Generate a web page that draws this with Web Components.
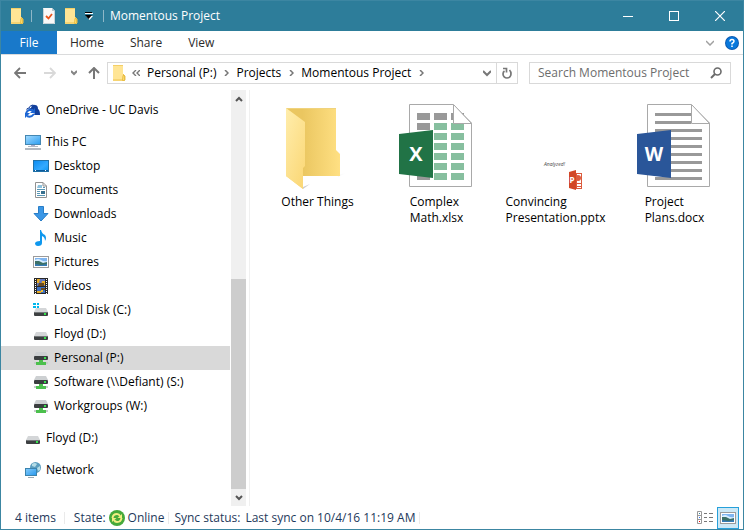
<!DOCTYPE html>
<html lang="en">
<head>
<meta charset="utf-8">
<title>Momentous Project</title>
<style>
html, body { margin: 0; }
body { font: 12px/16px "Open Sans", "Noto Sans", sans-serif; color: #000; background: #fff; }
</style>
</head>
<body>
<explorer-window></explorer-window>
<script>
const folder = `<path d="M1 0H11V9L13 11V16H1Z" fill="#ffe595"/><path d="M1 15H13V11L11 9" fill="none" stroke="#edc351"/><path d="M11 10.500H12.500V15.500H10.500Z" fill="#ffdf6e" stroke="#e8bd45"/><path d="M1 0.500H11" stroke="#f4cf67"/>`;
const drive = `<path d="M3 4H13L15 8H1Z" fill="#d4d6d8"/><rect x="1" y="8" width="14" height="4" rx="1" fill="#3d4042"/><rect x="2" y="8" width="12" height="1" fill="#74787a"/><rect x="11" y="9" width="2" height="2" fill="#35e34b"/>`;
const photo = `<rect x="0.500" y="0.500" width="15" height="11" fill="#fff" stroke="#9b9b9b"/><rect x="2" y="2" width="12" height="8" fill="#7fb5f0"/><path d="M2 4Q5 2 8 4T14 5V7H2Z" fill="#d7edff"/><path d="M2 5L6 5L10 7L14 6V10H2Z" fill="#3d7168"/><path d="M2 10V8L8 9L14 8V10Z" fill="#357bb5"/>`;
const svg = (w, h, b) => `<svg width="${w}" height="${h}" viewBox="0 0 ${w} ${h}" fill="none" aria-hidden="true">${b}</svg>`;
const chev = (d, c = '#777', w = 8, h = 8, s = 2) => svg(w, h, `<path d="${d}" stroke="${c}" stroke-width="${s}"/>`);
const netDrive = svg(16, 16, `<path d="M3 2H13L15 6H1Z" fill="#cdd0d2"/><rect x="1" y="6" width="14" height="4" rx="1" fill="#3b3e40"/><rect x="11" y="7" width="2" height="2" fill="#35e34b"/><path d="M1 12H15V14H1Z" fill="#c9cccd"/><path d="M6 10H10V12H13V15H3V12H6Z" fill="#4cc04d"/>`);
const page = `<path d="M10.500 0.500H54L72.500 19V82.500H10.500Z" fill="#fff" stroke="#a9a9a9"/>`;
const fold = `<path d="M54.500 0.500V19.500H72.500Z" fill="#fff" stroke="#a9a9a9"/>`;
const cells = () => {
  let s = '';
  for (let r = 0; r < 7; r++) for (let c = 0; c < 3; c++)
    s += `<rect x="${18 + c * 17}" y="${9 + r * 10}" width="13" height="7" fill="${r === 0 || c === 0 ? '#999' : '#87bf9f'}"/>`;
  return s;
};
const lines = () => {
  let s = '';
  for (let r = 0; r < 9; r++) s += `<rect x="18" y="${9 + r * 8}" width="${r < 2 ? 36 : 47}" height="3" fill="#999"/>`;
  return s;
};
const ICONS = {
  folder: svg(14, 16, folder),
  check: svg(14, 16, `<path d="M1 0H10L13 3V16H1Z" fill="#f8f8f8"/><path d="M10 0V3H13Z" fill="#bcc8cd"/><path d="M4 8L6.500 10.500L10 6" stroke="#e8541c" stroke-width="1.800"/><path d="M1.500 0.500V15.500H12.500V3" stroke="#c8d3d8"/>`),
  overflow: svg(8, 8, `<path d="M0 1.500H8" stroke="#fff"/><path d="M0 0.500H7" stroke="#000"/><path d="M1 4H8L4.500 8Z" fill="#fff"/><path d="M0 3H7L3.500 7Z" fill="#000"/>`),
  min: svg(10, 10, `<path d="M0 5.500H10" stroke="#fff"/>`),
  max: svg(10, 10, `<rect x="0.500" y="0.500" width="9" height="9" stroke="#fff"/>`),
  close: svg(10, 10, `<path d="M0 0L10 10M10 0L0 10" stroke="#fff" stroke-width="1.200"/>`),
  collapse: chev('M0 1L4 5L8 1', '#a0a0a0', 8, 6, 1.5),
  back: svg(12, 12, `<path d="M12 6H1M6 1L1 6L6 11" stroke="#777" stroke-width="1.800"/>`),
  forward: svg(12, 12, `<path d="M0 6H11M6 1L11 6L6 11" stroke="#d9d9d9" stroke-width="1.800"/>`),
  recent: chev('M0 1L3 4L6 1', '#858585', 6, 6),
  up: svg(12, 12, `<path d="M6 12V1M1 6L6 1L11 6" stroke="#777" stroke-width="2"/>`),
  more: svg(8, 6, `<path d="M4 0L1 3L4 6M8 0L5 3L8 6" stroke="#777" stroke-width="1.400"/>`),
  next: svg(5, 6, `<path d="M1 0L4 3L1 6" stroke="#777" stroke-width="1.500"/>`),
  drop: chev('M0 2L4 6L8 2', '#777', 8, 8),
  refresh: svg(10, 12, `<path d="M7.500 3Q9 4.500 9 7A4 4 0 0 1 1 7Q1 5 2.500 4" stroke="#777" stroke-width="1.700"/><path d="M1 1.500H4.500V5.500" stroke="#777" stroke-width="1.700"/>`),
  search: svg(12, 12, `<circle cx="7.500" cy="4.500" r="3.500" stroke="#6b6b6b" stroke-width="1.600"/><path d="M5 7L1 11" stroke="#6b6b6b" stroke-width="2"/>`),
  sup: chev('M1 6L4 3L7 6', '#555'),
  sdown: chev('M1 2L4 5L7 2', '#555'),
  onedrive: svg(16, 16, `<path d="M3 9Q3 6 6 6Q7 2 10 3Q13 3 13 7Q15 8 15 13H8Z" fill="#123f9c"/><path d="M2 9Q1 6 4 6Q5 3 8 3" stroke="#123f9c"/><circle cx="5" cy="11.500" r="4.500" fill="#fff"/><path d="M1 11Q4 6 8 9M9 12Q6 16 2 14" stroke="#1d66d4" stroke-width="2"/><path d="M10 6V11H5ZM0 16V11H5Z" fill="#1d66d4"/>`),
  pc: svg(16, 16, `<defs><linearGradient id="g" x2="1" y2="1"><stop stop-color="#a5dcff"/><stop offset="1" stop-color="#2b9df0"/></linearGradient></defs><rect x="0.500" y="1.500" width="15" height="9" fill="url(#g)" stroke="#4487b2"/><path d="M6 11H10V12H6Z" fill="#aac"/><path d="M3 12H13V13H3ZM0 14H16V16H0Z" fill="#b2b9c1"/>`),
  desktop: svg(16, 16, `<defs><linearGradient id="g" x2="1" y2="1"><stop stop-color="#0a8af0"/><stop offset=".6" stop-color="#33aaff"/><stop offset="1" stop-color="#0996f5"/></linearGradient></defs><rect x="0.500" y="2.500" width="15" height="11" fill="url(#g)" stroke="#2071a8"/><path d="M1 12.500H15" stroke="#0b5b9c"/><path d="M2 12.500H4M12 12.500H14" stroke="#fff" stroke-dasharray="1"/>`),
  documents: svg(16, 16, `<path d="M2.500 0.500H10L13.500 4V15.500H2.500Z" fill="#fff" stroke="#929292"/><path d="M10 0.500V4H13.500" stroke="#929292"/><path d="M5 3H9V6H4Z" fill="#8fc2dd"/><path d="M4 7.500H12M4 9.500H7M4 11.500H7M4 13.500H12" stroke="#5796b5"/><rect x="8" y="9" width="4" height="3" fill="#38708f"/><path d="M10 5.500H12" stroke="#5796b5"/>`),
  downloads: svg(16, 16, `<path d="M5.500 0.500H10.500V7.500H15L8 15L1 7.500H5.500Z" fill="#3b97e6" stroke="#287dc7"/>`),
  music: svg(16, 16, `<path d="M7 0H8Q9 4 12 5Q14 8 12 11Q12 7 9 6V13Q9 16 5 16Q2 16 2 13Q3 11 7 11Z" fill="#0f98ee"/>`),
  pictures: svg(16, 12, photo),
  videos: svg(16, 16, `<rect x="1" y="0" width="14" height="16" fill="#292929"/><path d="M2.500 1V16M13.500 1V16" stroke="#fff" stroke-dasharray="1"/><rect x="4" y="1" width="8" height="7" fill="#6679bc"/><rect x="4" y="9" width="8" height="6" fill="#3b6fc4"/><path d="M4 1H7L6 5H4ZM9 3H12V7H8ZM4 13H8V15H4Z" fill="#e8aa22"/><path d="M6 5H11V8H5ZM8 10H12V12H8Z" fill="#6a4b20"/><path d="M8 12H10V14H8Z" fill="#efbe36"/>`),
  disk: svg(16, 16, `<g transform="translate(0 2)">${drive}</g><path d="M0 1H3V3H0ZM4 1H6V3H4ZM0 4H3V6H0ZM4 4H6V6H4Z" fill="#00b7ed"/>`),
  drive: svg(16, 16, `<g transform="translate(0 2)">${drive}</g>`),
  net: netDrive,
  network: svg(16, 16, `<defs><linearGradient id="g" x2="1" y2="1"><stop stop-color="#86ccfa"/><stop offset="1" stop-color="#2697ed"/></linearGradient></defs><circle cx="10.500" cy="5.500" r="5.500" fill="#5b9dbe"/><path d="M7 2Q10 0 12 2L10 5L7 4ZM12 6L15 4V8L13 9Z" fill="#b4dce6"/><rect x="0.500" y="6.500" width="11" height="7" fill="url(#g)" stroke="#3b83ad"/><path d="M3 15.500H9" stroke="#9baab2"/>`),
  help: svg(14, 14, `<circle cx="7" cy="7" r="7" fill="#0c59b0"/><circle cx="7" cy="7" r="6" fill="#0878dc"/><path d="M5 5.500Q5 3.500 7 3.500T9 5.300Q9 6.300 7 7.500V8.500M7 9.500V11" stroke="#fff" stroke-width="1.500"/>`),
  sync: svg(16, 16, `<circle cx="8" cy="8" r="8" fill="#46a93a"/><path d="M3.500 8Q4 4 8 4Q10 4 11 6M12.500 8Q12 12 8 12Q6 12 5 10" stroke="#f2ee83" stroke-width="2"/><path d="M13 4V8H8.500ZM3 12V8H7.500Z" fill="#f2ee83"/>`),
  details: svg(16, 14, `<path d="M0.500 0.500H4.500V12.500H0.500ZM0.500 4.500H4.500M0.500 8.500H4.500" stroke="#999"/><path d="M2 2.500H3" stroke="#3c86a0"/><path d="M2 6.500H3" stroke="#2b73ff"/><path d="M2 10.500H3" stroke="#e00"/><path d="M7 2.500H10M12 2.500H16M7 6.500H10M12 6.500H16M7 10.500H10M12 10.500H16" stroke="#777"/>`),
  thumbs: svg(16, 12, photo),
  bigfolder: svg(80, 88, `<defs><linearGradient id="g"><stop offset=".3" stop-color="#eac660"/><stop offset="1" stop-color="#ffe083"/></linearGradient><linearGradient id="f" x2=".7" y2="1"><stop stop-color="#ffedac"/><stop offset="1" stop-color="#fbd97a"/></linearGradient><linearGradient id="s"><stop stop-color="#ccc"/><stop offset="1" stop-color="#fff"/></linearGradient></defs><path d="M60 73L68 71L60 75ZM25 85L32 82L25 87Z" fill="url(#s)"/><path d="M8 6H58V48L62 52V74H8Z" fill="url(#g)"/><path d="M8 6.500H58" stroke="#f0d37d"/><path d="M8 74L25 87V74Z" fill="#fbd97a"/><path d="M8 6L27 20V64L25 66V87L8 74Z" fill="url(#f)"/>`),
  excel: svg(80, 88, `<g transform="translate(2 2)">${page}${cells()}${fold}<path d="M0 30L34 26V74L0 70Z" fill="#217346"/><text x="17" y="57" text-anchor="middle" font-family="Open Sans" font-size="20" font-weight="700" fill="#fff">X</text></g>`),
  word: svg(80, 88, `<g transform="translate(2 2)">${page}${lines()}${fold}<path d="M0 30L34 26V74L0 70Z" fill="#2a5699"/><text x="17" y="57" text-anchor="middle" font-family="Open Sans" font-size="19" font-weight="700" fill="#fff">W</text></g>`),
  ppt: svg(80, 88, `<text x="28" y="64" font-family="Open Sans" font-size="5" font-style="italic" fill="#444">Analyzed!</text><rect x="60.500" y="71.500" width="5" height="15" fill="#fff" stroke="#dc5b3d"/><path d="M61 81.500H65M61 84.500H65" stroke="#dc5b3d"/><circle cx="62" cy="76" r="3" fill="#dc5b3d"/><path d="M53 70L60 68V88L53 86Z" fill="#d24726"/><text x="56" y="81" text-anchor="middle" font-family="Open Sans" font-size="8" font-weight="700" fill="#fff">P</text>`)
};
const base = `*{box-sizing:border-box}button,input{font:inherit;color:inherit;background:none;border:0;padding:0;margin:0}button{display:flex;align-items:center;justify-content:center}a{color:inherit;text-decoration:none}`;
const define = (name, css, html) => {
  const t = document.createElement('template');
  t.innerHTML = `<style>${base}${css}</style>${html}`;
  customElements.define(name, class extends HTMLElement {
    constructor() { super(); this.attachShadow({ mode: 'open' }).append(t.content.cloneNode(true)); }
  });
};
customElements.define('sys-icon', class extends HTMLElement {
  constructor() { super(); this.attachShadow({ mode: 'open' }); }
  connectedCallback() {
    this.shadowRoot.innerHTML = `<style>:host{display:inline-flex;flex:none}svg{display:block}</style>${ICONS[this.getAttribute('name')]}`;
  }
});
define('title-bar', `
:host{display:flex;align-items:center;height:30px;padding-left:9px;background:#2d7d9a;color:#fff}
.sep{width:1px;height:12px;margin:0 6px 0 7px;background:#8eb7c7}
.qa{width:22px;height:24px}.small{width:14px}
h1{font:inherit;margin:0;flex:1}
.cap{width:46px;height:30px}`,
`<sys-icon name="folder"></sys-icon><span class="sep"></span>
<button class="qa" aria-label="Properties"><sys-icon name="check"></sys-icon></button>
<button class="qa" aria-label="New folder"><sys-icon name="folder"></sys-icon></button>
<button class="qa small" aria-label="Customize toolbar"><sys-icon name="overflow"></sys-icon></button>
<span class="sep"></span><h1>Momentous Project</h1>
<button class="cap" aria-label="Minimize"><sys-icon name="min"></sys-icon></button>
<button class="cap" aria-label="Maximize"><sys-icon name="max"></sys-icon></button>
<button class="cap" aria-label="Close"><sys-icon name="close"></sys-icon></button>`);
define('ribbon-tabs', `
:host{display:flex;height:24px;padding-right:4px;border-bottom:1px solid #dadbdc;color:#2b2b2b}
button{padding:0 13px}.file{width:56px;background:#1979ca;color:#fff}
.push{margin-left:auto;padding:0 11px}.help{padding:0}`,
`<button class="file">File</button><button>Home</button><button>Share</button><button>View</button>
<button class="push" aria-label="Expand ribbon"><sys-icon name="collapse"></sys-icon></button>
<button class="help" aria-label="Help"><sys-icon name="help"></sys-icon></button>`);
define('address-bar', `
:host{display:flex;align-items:center;height:35px;padding:0 12px;background:#fff}
.nav{display:flex;margin-right:6px}.nav button{width:14px;height:22px}
.nav .forward{margin:0 10px 0 16px}.nav .up{margin-left:6px}
.box{display:flex;align-items:center;height:22px;border:1px solid #d9d9d9}
.path{flex:1;min-width:0;padding-left:4px;margin-right:11px}
.path button{height:20px}.crumb{margin:0 8px 0 7px}
.path .drop{margin-left:auto;width:18px}.path .refresh{width:21px;border-left:1px solid #d9d9d9}
.more{margin-left:6px}
.find{width:202px;padding:0 8px}
input{flex:1;min-width:0;outline:0}input::placeholder{color:#6d6d6d;opacity:1}`,
`<div class="nav"><button aria-label="Back"><sys-icon name="back"></sys-icon></button>
<button class="forward" aria-label="Forward"><sys-icon name="forward"></sys-icon></button>
<button aria-label="Recent locations"><sys-icon name="recent"></sys-icon></button>
<button class="up" aria-label="Up"><sys-icon name="up"></sys-icon></button></div>
<div class="box path"><sys-icon name="folder"></sys-icon><sys-icon class="more" name="more"></sys-icon>
<button class="crumb">Personal (P:)</button><sys-icon name="next"></sys-icon>
<button class="crumb">Projects</button><sys-icon name="next"></sys-icon>
<button class="crumb">Momentous Project</button><sys-icon name="next"></sys-icon>
<button class="drop" aria-label="Previous locations"><sys-icon name="drop"></sys-icon></button>
<button class="refresh" aria-label="Refresh"><sys-icon name="refresh"></sys-icon></button></div>
<div class="box find"><input aria-label="Search" placeholder="Search Momentous Project"><button aria-label="Search"><sys-icon name="search"></sys-icon></button></div>`);
define('tree-row', `
:host{display:block}:host([gap]){margin-top:8px}
a{display:flex;align-items:center;gap:5px;height:24px;padding-left:24px;white-space:nowrap}
:host([child]) a{padding-left:32px}:host([selected]) a{background:#d9d9d9}`,
`<a href="#"><slot name="icon"></slot><span><slot></slot></span></a>`);
define('nav-pane', `
:host{display:flex;width:249px;flex:none;border-right:1px solid #f0f0f0}
nav{flex:1;padding-top:8px}
.bar{display:flex;flex-direction:column;width:15px;margin:0 3px 0 1px;background:#f0f0f0}
.bar button{height:17px}.track{flex:1;display:flex;flex-direction:column;justify-content:flex-end}
.thumb{height:55%;background:#cdcdcd}`,
`<nav aria-label="Folders"><slot></slot></nav>
<div class="bar"><button aria-label="Scroll up"><sys-icon name="sup"></sys-icon></button><div class="track"><div class="thumb"></div></div><button aria-label="Scroll down"><sys-icon name="sdown"></sys-icon></button></div>`);
define('file-tile', `
:host{display:block;width:119px}
a{display:flex;flex-direction:column;align-items:center;gap:4px}
.label{display:grid;line-height:16px;white-space:nowrap}`,
`<a href="#"><slot name="icon"></slot><span class="label"><slot></slot></span></a>`);
define('file-pane', `:host{display:flex;flex:1;min-width:0;flex-wrap:wrap;align-content:flex-start;padding:12px 0 0 8px}`, `<slot></slot>`);
define('status-bar', `
:host{display:flex;align-items:center;height:23px;color:#1e395b}
.c{display:flex;align-items:center;height:12px;border-right:1px solid #eaeaea}
.count{padding:0 8px 0 14px}.state{padding:0 4px 0 9px;gap:3px}
.last{padding:0 4px 0 5px;gap:5px}
.views{margin-left:auto;display:flex}.views button{width:22px;height:22px;margin-right:1px}
.views .on{border:1px solid #26a0da;background:#cce8f6;margin:0 4px 0 0}`,
`<div class="c count">4 items</div>
<div class="c state"><span>State:</span><sys-icon name="sync"></sys-icon><span>Online</span></div>
<div class="c last"><span>Sync status:</span><span>Last sync on 10/4/16 11:19 AM</span></div>
<div class="views"><button aria-label="Details view"><sys-icon name="details"></sys-icon></button><button class="on" aria-label="Large icons view"><sys-icon name="thumbs"></sys-icon></button></div>`);
const rows = [
  ['onedrive', 'OneDrive - UC Davis', ''], ['pc', 'This PC', 'gap'], ['desktop', 'Desktop', 'child'],
  ['documents', 'Documents', 'child'], ['downloads', 'Downloads', 'child'], ['music', 'Music', 'child'],
  ['pictures', 'Pictures', 'child'], ['videos', 'Videos', 'child'], ['disk', 'Local Disk (C:)', 'child'],
  ['drive', 'Floyd (D:)', 'child'], ['net', 'Personal (P:)', 'child selected'],
  ['net', 'Software (\\\\Defiant) (S:)', 'child'], ['net', 'Workgroups (W:)', 'child'],
  ['drive', 'Floyd (D:)', 'gap'], ['network', 'Network', 'gap']
].map(([i, t, a]) => `<tree-row ${a}><sys-icon slot="icon" name="${i}"></sys-icon>${t}</tree-row>`).join('');
const tiles = [
  ['bigfolder', 'Other Things'], ['excel', 'Complex<br>Math.xlsx'],
  ['ppt', 'Convincing<br>Presentation.pptx'], ['word', 'Project<br>Plans.docx']
].map(([i, t]) => `<file-tile><sys-icon slot="icon" name="${i}"></sys-icon><span>${t}</span></file-tile>`).join('');
define('explorer-window', `
:host{display:flex;flex-direction:column;min-height:100vh;box-sizing:border-box;border:1px solid #3c86a2}
main{display:flex;flex:1}`,
`<title-bar></title-bar><ribbon-tabs></ribbon-tabs><address-bar></address-bar>
<main><nav-pane>${rows}</nav-pane><file-pane>${tiles}</file-pane></main><status-bar></status-bar>`);
</script>
</body>
</html>
